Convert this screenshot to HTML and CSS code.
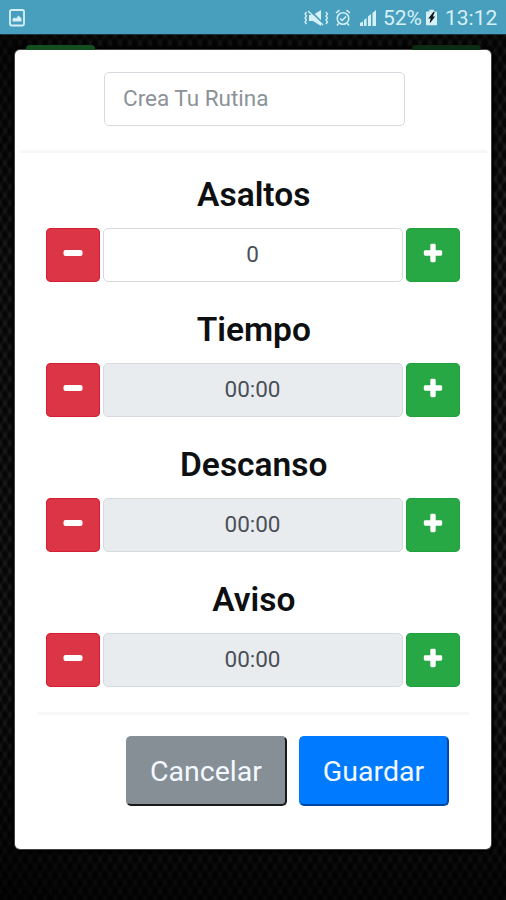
FILE: index.html
```html
<!DOCTYPE html>
<html lang="es">
<head>
<meta charset="utf-8">
<title>Crea Tu Rutina</title>
<link rel="stylesheet" href="styles.css">
</head>
<body>
<svg class="defs" aria-hidden="true">
  <symbol id="minus" viewBox="0 0 20 20"><rect x="0.5" y="7" width="19" height="6" rx="2"/></symbol>
  <symbol id="plus" viewBox="0 0 20 20"><path d="M8.7 .8h2.6q1.4 0 1.4 1.4v5.1h5.1q1.4 0 1.4 1.4v2.6q0 1.4-1.4 1.4h-5.1v5.1q0 1.4-1.4 1.4H8.700q-1.400 0-1.400-1.400v-5.100H2.200q-1.400 0-1.400-1.400V8.700q0-1.400 1.400-1.400h5.100V2.200Q7.300.8 8.700.8z"/></symbol>
</svg>
<header class="status">
  <svg class="picture" viewBox="0 0 16 18"><rect x="1" y="1" width="14" height="15.500" rx="1.500" fill="none" stroke="currentColor" stroke-width="1.800"/><path d="M3.500 12.500V10l2-1.500 1.500 1 2.500-3 3 3v3z" fill="currentColor"/></svg>
  <div class="indicators">
    <svg class="mute" viewBox="0 0 27 18"><path d="M6 6h4l8-5v16l-8-5H6z" fill="currentColor"/><path d="M6.500 1l14 14" stroke="#489fbd" stroke-width="1.800"/><path d="M5 2l15 14M3.500 3L2 5l1.500 2L2 9l1.500 2L2 13l1.500 2M23 3l1.500 2L23 7l1.500 2-1.500 2 1.500 2-1.500 2" fill="none" stroke="currentColor" stroke-width="1.300"/></svg>
    <svg class="alarm" viewBox="0 0 16 18"><g fill="none" stroke="currentColor" stroke-width="1.500"><circle cx="8" cy="9.500" r="5.800"/><path d="M1 4l3.500-2.800M15 4l-3.500-2.800M5 9.500l2.200 2L11 7.500M3.500 14.500L2 16.500M12.500 14.500l1.500 2"/></g></svg>
    <svg class="signal" viewBox="0 0 18 18"><path d="M1 17v-3l3-1.500V17zM5 17v-6l2.500-2v8zM9 17V7.500L12 5v12zM13.500 17V4L17 1v16z" fill="currentColor"/></svg>
    <span class="percent">52%</span>
    <svg class="battery" viewBox="0 0 12 17"><path d="M3.500 0h5v2H11q1 0 1 1v13q0 1-1 1H1q-1 0-1-1V3q0-1 1-1h2.500z" fill="currentColor"/><path d="M8 2.500L2.500 9.500h2.500L4 15l6-7.500H7.500l2-5z" fill="#10191c"/></svg>
    <span class="clock">13:12</span>
  </div>
</header>
<main class="screen">
  <div class="behind"><i></i><i></i></div>
  <section class="modal">
    <div class="top"><input class="field name" placeholder="Crea Tu Rutina" aria-label="Crea Tu Rutina"></div>
    <div class="settings">
      <div class="setting"><h2>Asaltos</h2><div class="row"><button class="step less" aria-label="Menos"><svg><use href="#minus"/></svg></button><div class="field value editable">0</div><button class="step more" aria-label="Más"><svg><use href="#plus"/></svg></button></div></div>
      <div class="setting"><h2>Tiempo</h2><div class="row"><button class="step less" aria-label="Menos"><svg><use href="#minus"/></svg></button><div class="field value">00:00</div><button class="step more" aria-label="Más"><svg><use href="#plus"/></svg></button></div></div>
      <div class="setting"><h2>Descanso</h2><div class="row"><button class="step less" aria-label="Menos"><svg><use href="#minus"/></svg></button><div class="field value">00:00</div><button class="step more" aria-label="Más"><svg><use href="#plus"/></svg></button></div></div>
      <div class="setting"><h2>Aviso</h2><div class="row"><button class="step less" aria-label="Menos"><svg><use href="#minus"/></svg></button><div class="field value">00:00</div><button class="step more" aria-label="Más"><svg><use href="#plus"/></svg></button></div></div>
    </div>
    <footer class="actions"><button class="cancel">Cancelar</button><button class="save">Guardar</button></footer>
  </section>
</main>
</body>
</html>
```
FILE: styles.css
```css
* { box-sizing: border-box; }
body {
  margin: 0;
  height: 900px;
  overflow: hidden;
  background: #050505;
  font-family: Roboto, sans-serif;
}
.defs { display: none; }
svg { display: block; flex: none; }
.status {
  height: 35px;
  display: flex;
  justify-content: space-between;
  padding: 0 9px;
  background: #489fbd;
  border-bottom: 1px solid #17333d;
  color: #d6f0f8;
}
.picture { width: 16px; height: 18px; margin-top: 9px; }
.indicators { display: flex; align-items: center; height: 35px; }
.mute { width: 27px; height: 18px; }
.alarm { width: 16px; height: 18px; margin-left: 5px; }
.signal { width: 18px; height: 18px; margin-left: 8px; }
.percent { margin-left: 6px; width: 40px; font-size: 21px; white-space: nowrap; }
.battery { width: 11px; height: 17px; margin-left: 3px; }
.clock { margin-left: 8px; width: 52px; font-size: 21px; white-space: nowrap; }
.screen {
  height: 865px;
  background:
    linear-gradient(90deg, rgba(0,0,0,.3), transparent 20%),
    linear-gradient(rgba(0,0,0,.5), transparent 25%, transparent 75%, rgba(0,0,0,.75)),
    radial-gradient(ellipse at center, #080808 0 28%, transparent 62%) 0 0 / 10px 16px,
    radial-gradient(ellipse at center, #080808 0 28%, transparent 62%) 5px 8px / 10px 16px,
    #242424;
}
.behind {
  height: 14.500px;
  padding: 10px 25px 0 26px;
  display: flex;
  justify-content: space-between;
}
.behind i { width: 69px; background: #144f20; border-radius: 4px 4px 0 0; }
.behind i + i { background: #0a2d13; }
.modal {
  width: 476px;
  height: 799px;
  margin-left: 15px;
  padding-left: .5px;
  background: #fff;
  border-radius: 5px;
  box-shadow: 0 0 0 1px #444, 0 0 3px 3px #000;
}
.top {
  height: 103px;
  margin: 0 4px;
  padding: 22.500px 0 0 84.500px;
  border-bottom: 3px solid #f7f7f7;
}
.field {
  height: 53.500px;
  border: 1.500px solid #d6dade;
  border-radius: 5px;
  background: #fff;
  font: 22.500px Roboto, sans-serif;
  color: #495057;
}
.name { display: block; width: 301px; padding: 0 17px 1px 18px; }
.name::placeholder { color: #8b9298; opacity: 1; }
.settings {
  margin: 0 21px 0 22px;
  height: 562px;
  border-bottom: 3px solid #f7f7f7;
  padding-top: 22px;
}
.setting { height: 135px; }
h2 {
  margin: 0;
  height: 53.500px;
  line-height: 40px;
  font-size: 33.500px;
  font-weight: 600;
  text-align: center;
  color: #0d0f11;
}
.row { display: flex; height: 53.500px; gap: 3px; padding-left: 8px; }
.step {
  width: 54px;
  border: 0;
  border-radius: 5px;
  padding: 0 0 3px;
  display: flex;
  align-items: center;
  justify-content: center;
  color: #fff;
}
.step svg { width: 20px; height: 20px; fill: currentColor; }
.less { background: #dc3545; box-shadow: inset 0 0 0 1px #d51e32; }
.more { background: #28a745; box-shadow: inset 0 0 0 1px #1ea33c; }
.value {
  width: 300px;
  padding-bottom: 2px;
  background: #e9ecef;
  display: flex;
  align-items: center;
  justify-content: center;
}
.editable { background: #fff; }
.actions { display: flex; gap: 12px; padding: 21.500px 0 0 110px; }
.actions button {
  height: 70px;
  border-style: solid;
  border-width: 2px;
  border-radius: 5px;
  padding: 0;
  font: 28.500px Roboto, sans-serif;
  color: #f4f9ff;
}
.actions .cancel { width: 161px; background: #868e96; border-color: #868e96 #17191b #17191b #868e96; }
.actions .save { width: 150px; background: #007bff; border-color: #007bff #0048a5 #0048a5 #007bff; }
```
